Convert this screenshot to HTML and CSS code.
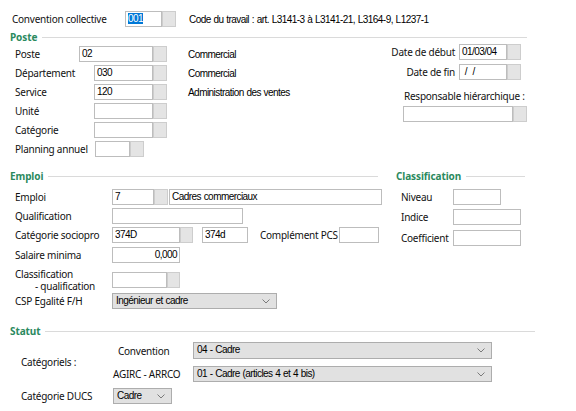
FILE: index.html
```html
<!DOCTYPE html>
<html lang="fr">
<head>
    <meta charset="UTF-8">
    <title>Fiche salarié - Emploi</title>
    <link rel="stylesheet" href="styles.css">
</head>
<body>
    <div class="dialog">
        <div class="row top">
            <span class="lbl w-conv">Convention collective</span>
            <span class="inp w37"><span class="selected">001</span></span><span class="btn"></span>
            <span class="val ml13">Code du travail : art. L3141-3 à L3141-21, L3164-9, L1237-1</span>
        </div>

        <!-- Poste -->
        <div class="sec sec-poste"><span class="sec-title">Poste</span><span class="sec-line"></span></div>
        <div class="poste">
            <div class="poste-left">
                <div class="row">
                    <span class="lbl w64">Poste</span>
                    <span class="inp w74">02</span><span class="btn"></span>
                    <span class="val ml21">Commercial</span>
                </div>
                <div class="row">
                    <span class="lbl w79">Département</span>
                    <span class="inp w59">030</span><span class="btn"></span>
                    <span class="val ml21">Commercial</span>
                </div>
                <div class="row">
                    <span class="lbl w79">Service</span>
                    <span class="inp w59">120</span><span class="btn"></span>
                    <span class="val ml21">Administration des ventes</span>
                </div>
                <div class="row">
                    <span class="lbl w79">Unité</span>
                    <span class="inp w59"></span><span class="btn"></span>
                </div>
                <div class="row">
                    <span class="lbl w79">Catégorie</span>
                    <span class="inp w59"></span><span class="btn"></span>
                </div>
                <div class="row">
                    <span class="lbl w80">Planning annuel</span>
                    <span class="inp w35"></span><span class="btn"></span>
                </div>
            </div>
            <div class="poste-right">
                <div class="row date-row">
                    <span class="lbl">Date de début</span>
                    <span class="inp w48">01/03/04</span><span class="btn"></span>
                </div>
                <div class="row date-row">
                    <span class="lbl">Date de fin</span>
                    <span class="inp w48">&nbsp;/ &nbsp;/</span><span class="btn"></span>
                </div>
                <div class="resp-lbl">Responsable hiérarchique :</div>
                <div class="row resp-field">
                    <span class="inp w110"></span><span class="btn"></span>
                </div>
            </div>
        </div>

        <!-- Emploi / Classification -->
        <div class="emploi">
            <div class="emploi-left">
                <div class="sec"><span class="sec-title">Emploi</span><span class="sec-line"></span></div>
                <div class="rows">
                    <div class="row">
                        <span class="lbl w97">Emploi</span>
                        <span class="inp w42">7</span><span class="btn"></span>
                        <span class="inp w213 ml1">Cadres commerciaux</span>
                    </div>
                    <div class="row">
                        <span class="lbl w97">Qualification</span>
                        <span class="inp w131"></span>
                    </div>
                    <div class="row">
                        <span class="lbl w97">Catégorie sociopro</span>
                        <span class="inp w68">374D</span><span class="btn w13"></span>
                        <span class="inp w46 ml9">374d</span>
                        <span class="lbl w79 ml12">Complément PCS</span>
                        <span class="inp w40"></span>
                    </div>
                    <div class="row mt4">
                        <span class="lbl w97">Salaire minima</span>
                        <span class="inp w68 num">0,000</span>
                    </div>
                    <div class="row tall">
                        <span class="lbl w97 two-lines">Classification<br><span class="indent">- qualification</span></span>
                        <span class="inp w55"></span><span class="btn w13"></span>
                    </div>
                    <div class="row flush">
                        <span class="lbl w97">CSP Egalité F/H</span>
                        <span class="select w165">Ingénieur et cadre
                            <svg class="chev" width="8" height="5" viewBox="0 0 8 5"><polyline points="0.5,0.5 4,4 7.5,0.5" fill="none" stroke="#7a7a7a" stroke-width="1"/></svg>
                        </span>
                    </div>
                </div>
            </div>
            <div class="emploi-right">
                <div class="sec"><span class="sec-title">Classification</span><span class="sec-line"></span></div>
                <div class="rows">
                    <div class="row">
                        <span class="lbl w52">Niveau</span>
                        <span class="inp w48"></span>
                    </div>
                    <div class="row mt4">
                        <span class="lbl w52">Indice</span>
                        <span class="inp w68"></span>
                    </div>
                    <div class="row mt5">
                        <span class="lbl w52">Coefficient</span>
                        <span class="inp w68"></span>
                    </div>
                </div>
            </div>
        </div>

        <!-- Statut -->
        <div class="sec sec-statut"><span class="sec-title">Statut</span><span class="sec-line"></span></div>
        <div class="statut">
            <span class="lbl w92">Catégoriels :</span>
            <div class="cat-rows">
                <div class="row h17">
                    <span class="lbl w75 ml5">Convention</span>
                    <span class="select w299 h17">04 - Cadre
                        <svg class="chev" width="8" height="5" viewBox="0 0 8 5"><polyline points="0.5,0.5 4,4 7.5,0.5" fill="none" stroke="#7a7a7a" stroke-width="1"/></svg>
                    </span>
                </div>
                <div class="row mt7">
                    <span class="lbl w80">AGIRC - ARRCO</span>
                    <span class="select w299">01 - Cadre (articles 4 et 4 bis)
                        <svg class="chev" width="8" height="5" viewBox="0 0 8 5"><polyline points="0.5,0.5 4,4 7.5,0.5" fill="none" stroke="#7a7a7a" stroke-width="1"/></svg>
                    </span>
                </div>
            </div>
        </div>
        <div class="row ducs">
            <span class="lbl w92">Catégorie DUCS</span>
            <span class="select w59">Cadre
                <svg class="chev" width="8" height="5" viewBox="0 0 8 5"><polyline points="0.5,0.5 4,4 7.5,0.5" fill="none" stroke="#7a7a7a" stroke-width="1"/></svg>
            </span>
        </div>
    </div>
</body>
</html>
```

FILE: styles.css
```css
body {
    margin: 0;
    background: #fff;
    font-family: 'Noto Sans', sans-serif;
    font-size: 10px;
    letter-spacing: -0.25px;
    color: #111;
}
.dialog {
    width: 576px;
    height: 411px;
    overflow: hidden;
}
.row {
    display: flex;
    align-items: center;
    height: 16px;
}
.lbl {
    flex: none;
    white-space: nowrap;
}
.val,
.inp,
.select {
    font-family: 'Liberation Sans', sans-serif;
    font-size: 10px;
    letter-spacing: -0.55px;
    word-spacing: 0.5px;
    color: #000;
    white-space: nowrap;
}
.inp {
    flex: none;
    box-sizing: border-box;
    height: 16px;
    border: 1px solid #bdbdbd;
    background: #fff;
    padding: 0 2px;
    line-height: 14px;
    overflow: hidden;
}
.inp.num {
    text-align: right;
}
.selected {
    background: #0078d7;
    color: #fff;
}
.btn {
    flex: none;
    box-sizing: border-box;
    width: 14px;
    height: 16px;
    background: #e4e4e4;
    border: 1px solid #cdcdcd;
}
.select {
    flex: none;
    box-sizing: border-box;
    position: relative;
    height: 16px;
    background: #e1e1e1;
    border: 1px solid #adadad;
    padding: 0 3px;
    line-height: 14px;
}
.chev {
    position: absolute;
    right: 6px;
    top: 5px;
}

/* section headings */
.sec {
    display: flex;
    align-items: center;
    gap: 5px;
    height: 12px;
    letter-spacing: -0.1px;
}
.sec-title {
    color: #2b8a5e;
    font-weight: bold;
}
.sec-line {
    flex: 1;
    height: 1px;
    background: #dadada;
}

/* top line */
.top {
    margin-top: 11px;
    padding-left: 12px;
}
.w-conv { width: 113px; }

/* poste */
.sec-poste {
    margin: 4px 49px 0 10px;
}
.poste {
    display: flex;
    margin-top: 1px;
}
.poste-left {
    width: 355px;
    padding: 2px 0 0 15px;
    display: flex;
    flex-direction: column;
    gap: 3px;
}
.poste-right {
    width: 157px;
}
.date-row {
    justify-content: flex-end;
    padding-right: 6px;
    margin-bottom: 4px;
}
.date-row .lbl {
    margin-right: 4px;
}
.resp-lbl {
    margin: 10px 0 0 34px;
    height: 12px;
    line-height: 12px;
}
.resp-field {
    margin: 4px 0 0 33px;
}

/* emploi */
.emploi {
    display: flex;
    margin-top: 13px;
}
.emploi-left {
    width: 372px;
    padding-left: 10px;
}
.emploi-left .sec {
    margin-right: 4px;
}
.emploi-right {
    width: 129px;
    margin-left: 14px;
}
.rows {
    margin-top: 7px;
    padding-left: 5px;
    display: flex;
    flex-direction: column;
    gap: 3px;
}
.row.tall {
    height: 27px;
}
.row.flush {
    margin-top: -3px;
}
.two-lines {
    line-height: 12px;
}
.indent {
    padding-left: 20px;
}

/* statut */
.sec-statut {
    margin: 16px 41px 0 10px;
}
.statut {
    display: flex;
    align-items: center;
    margin-top: 5px;
    padding-left: 21px;
}
.ducs {
    margin-top: 6px;
    padding-left: 21px;
}

/* sizes */
.h17 { height: 17px; }
.w13 { width: 13px; }
.w35 { width: 35px; }
.w37 { width: 37px; }
.w40 { width: 40px; }
.w42 { width: 42px; }
.w46 { width: 46px; }
.w48 { width: 48px; }
.w52 { width: 52px; }
.w55 { width: 55px; }
.w59 { width: 59px; }
.w64 { width: 64px; }
.w68 { width: 68px; }
.w74 { width: 74px; }
.w75 { width: 75px; }
.w79 { width: 79px; }
.w80 { width: 80px; }
.w92 { width: 92px; }
.w97 { width: 97px; }
.w110 { width: 110px; }
.w131 { width: 131px; }
.w165 { width: 165px; }
.w213 { width: 213px; }
.w299 { width: 299px; }
.ml1 { margin-left: 1px; }
.ml5 { margin-left: 5px; }
.ml9 { margin-left: 9px; }
.ml12 { margin-left: 12px; }
.ml13 { margin-left: 13px; }
.ml21 { margin-left: 21px; }
.mt4 { margin-top: 1px; }
.mt5 { margin-top: 2px; }
.mt7 { margin-top: 7px; }
```
